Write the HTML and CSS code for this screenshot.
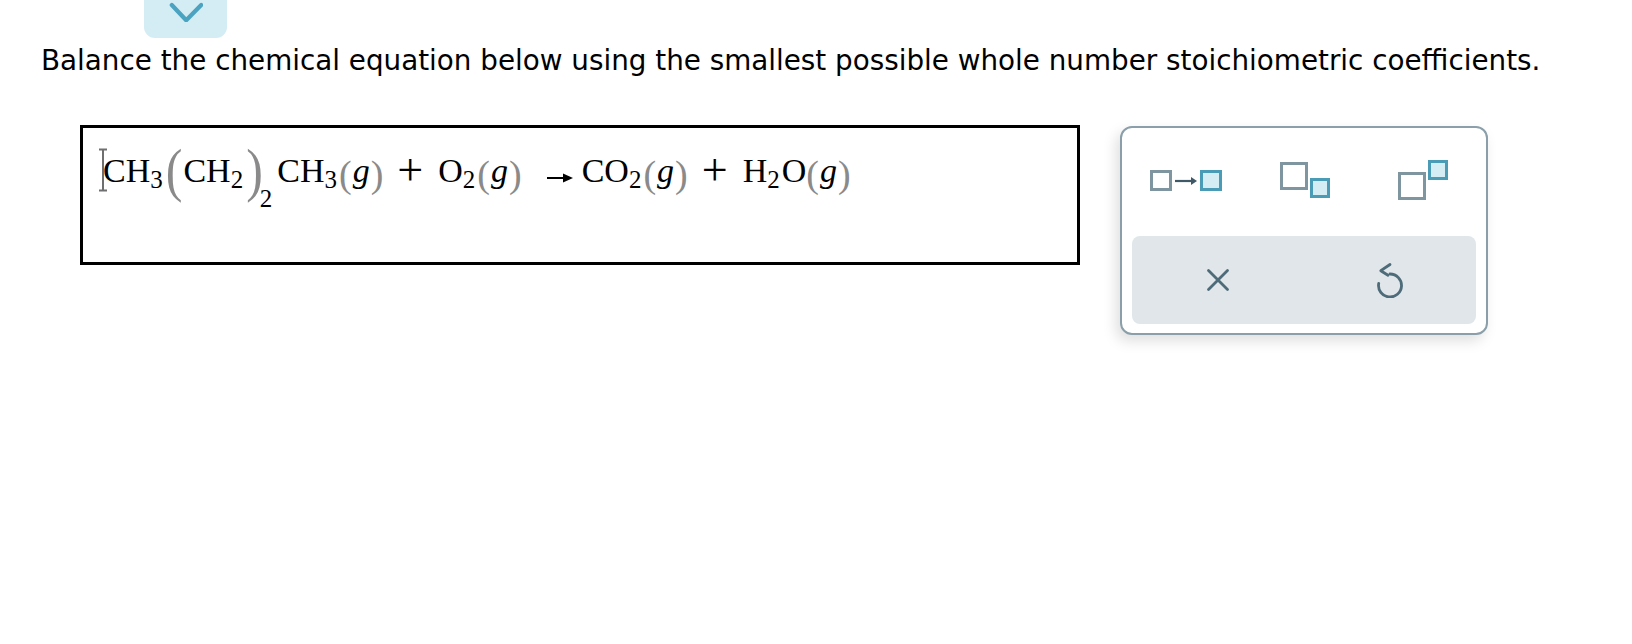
FILE: index.html
```html
<!DOCTYPE html>
<html>
<head>
<meta charset="utf-8">
<title>Balance equation</title>
<link rel="stylesheet" href="styles.css">
</head>
<body>
<div class="tab"><svg class="chev" width="34" height="22" viewBox="0 0 34 22"><polyline points="2.8,5 17.2,20.2 32.2,5"/></svg></div>
<p class="prompt">Balance the chemical equation below using the smallest possible whole number stoichiometric coefficients.</p>
<div class="work">
  <div class="eqbox">
    <div class="eq"><svg class="caret" width="10" height="44" viewBox="0 0 10 44"><path d="M1 1.5 H9 M5 1.5 V42.5 M1 42.5 H9"/></svg><span>CH</span><sub>3</sub><span class="bp">(</span>CH<sub>2</sub><span class="bp bpr">)</span><sub class="low">2</sub>CH<sub>3</sub><span class="gp">(</span><i>g</i><span class="gp">)</span><span class="op">+</span>O<sub>2</sub><span class="gp">(</span><i>g</i><span class="gp">)</span><svg class="arrow" width="26" height="10" viewBox="0 0 26 10"><path class="shaft" d="M0 5 H18"/><polygon points="16,0.5 26,5 16,9.5"/></svg>CO<sub>2</sub><span class="gp">(</span><i>g</i><span class="gp">)</span><span class="op">+</span>H<sub>2</sub>O<span class="gp">(</span><i>g</i><span class="gp">)</span></div>
  </div>
  <div class="palette">
    <div class="tools">
      <svg class="ic ic1" width="72" height="40" viewBox="0 0 72 40"><rect class="g" x="1.5" y="11.5" width="19" height="18"/><path class="ar" d="M25 21 H42"/><polygon class="arh" points="41,17 47,21 41,25"/><rect class="b" x="51.5" y="11.5" width="19" height="18"/></svg>
      <svg class="ic ic2" width="50" height="40" viewBox="0 0 50 40"><rect class="g" x="1.5" y="3.5" width="25" height="25"/><rect class="b" x="31.5" y="19.5" width="17" height="17"/></svg>
      <svg class="ic ic3" width="50" height="40" viewBox="0 0 50 40"><rect class="g" x="1.5" y="13.5" width="25" height="25"/><rect class="b" x="31.5" y="1.5" width="17" height="17"/></svg>
    </div>
    <div class="actions">
      <svg class="act" width="24" height="24" viewBox="0 0 24 24"><path d="M2.5 2.5 L21.5 21.5 M21.5 2.5 L2.5 21.5"/></svg>
      <svg class="act" width="28" height="36" viewBox="0 0 28 36"><path d="M14 12 A11.5 11.5 0 1 1 2.7 21.5"/><path d="M14 2.5 L4.8 8.7 L12 13.2"/></svg>
    </div>
  </div>
</div>
</body>
</html>
```
FILE: styles.css
```css
html, body {
  margin: 0;
  padding: 0;
  background: #ffffff;
}

body {
  width: 1632px;
  height: 644px;
  overflow: hidden;
  font-family: "DejaVu Sans", Verdana, sans-serif;
  color: #000;
}

.tab {
  margin-left: 144px;
  width: 83px;
  height: 38px;
  background: #d4ecf3;
  border-radius: 0 0 11px 11px;
  display: flex;
  justify-content: center;
}

.chev polyline {
  fill: none;
  stroke: #4aa3c0;
  stroke-width: 4.2;
  stroke-linecap: round;
  stroke-linejoin: round;
}

.prompt {
  margin: 8px 0 0 41px;
  font-size: 27.8px;
  line-height: 30px;
  color: #000;
}

.work {
  display: flex;
  align-items: flex-start;
  gap: 40px;
  margin-top: 49px;
  padding-left: 80px;
}

.eqbox {
  box-sizing: border-box;
  width: 1000px;
  height: 140px;
  border: 3px solid #000;
  padding: 8px 0 0 15px;
}

.eq {
  font-family: "Liberation Serif", "Times New Roman", serif;
  font-size: 34px;
  line-height: 70px;
  white-space: nowrap;
  color: #000;
}

.caret {
  vertical-align: -10px;
  margin-right: -5px;
}

.caret path {
  fill: none;
  stroke: #6f6f6f;
  stroke-width: 2;
}

.eq sub {
  font-size: 25px;
  line-height: 1;
  vertical-align: -6px;
  margin-right: 2px;
}

.eq sub.low {
  vertical-align: -25px;
  margin-left: 0;
  margin-right: 5px;
}

.eq i {
  font-style: italic;
  margin: 0 1px;
}

.bp {
  display: inline-block;
  font-size: 50px;
  line-height: 50px;
  vertical-align: -6px;
  color: #8a8a8a;
  transform: scaleY(1.2);
  transform-origin: 50% 60%;
  margin: 0 1px;
}

.bp.bpr {
  margin: 0 -3px 0 1px;
}

.gp {
  font-size: 38px;
  vertical-align: -5px;
  color: #8a8a8a;
}

.op {
  font-size: 46px;
  line-height: 1;
  vertical-align: -3px;
  margin: 0 15px 0 14px;
}

.arrow {
  vertical-align: -1px;
  margin: 0 9px 0 25px;
}

.arrow .shaft {
  stroke: #000;
  stroke-width: 2;
}

.arrow polygon {
  fill: #000;
}

.palette {
  box-sizing: border-box;
  margin-top: 1px;
  width: 368px;
  height: 209px;
  border: 2px solid #8a9fa9;
  border-radius: 12px;
  padding: 0 10px 9px 10px;
  background: #fff;
  box-shadow: -4px 6px 14px rgba(0, 0, 0, 0.13);
  display: flex;
  flex-direction: column;
}

.tools {
  height: 108px;
  display: flex;
  align-items: flex-start;
  padding-top: 32px;
  box-sizing: border-box;
}

.ic1 { margin-left: 18px; }
.ic2 { margin-left: 58px; }
.ic3 { margin-left: 68px; }

.ic .g {
  fill: #fff;
  stroke: #7f959f;
  stroke-width: 3;
}

.ic .b {
  fill: #d4edf4;
  stroke: #4a9bb5;
  stroke-width: 3;
}

.ic .ar {
  stroke: #3f5966;
  stroke-width: 2.2;
}

.ic .arh {
  fill: #3f5966;
}

.actions {
  height: 88px;
  background: #e0e6e9;
  border-radius: 8px;
  display: grid;
  grid-template-columns: 1fr 1fr;
  align-items: center;
  justify-items: center;
}

.act path {
  fill: none;
  stroke: #4d6b78;
  stroke-width: 2.8;
  stroke-linecap: round;
  stroke-linejoin: round;
}
```
